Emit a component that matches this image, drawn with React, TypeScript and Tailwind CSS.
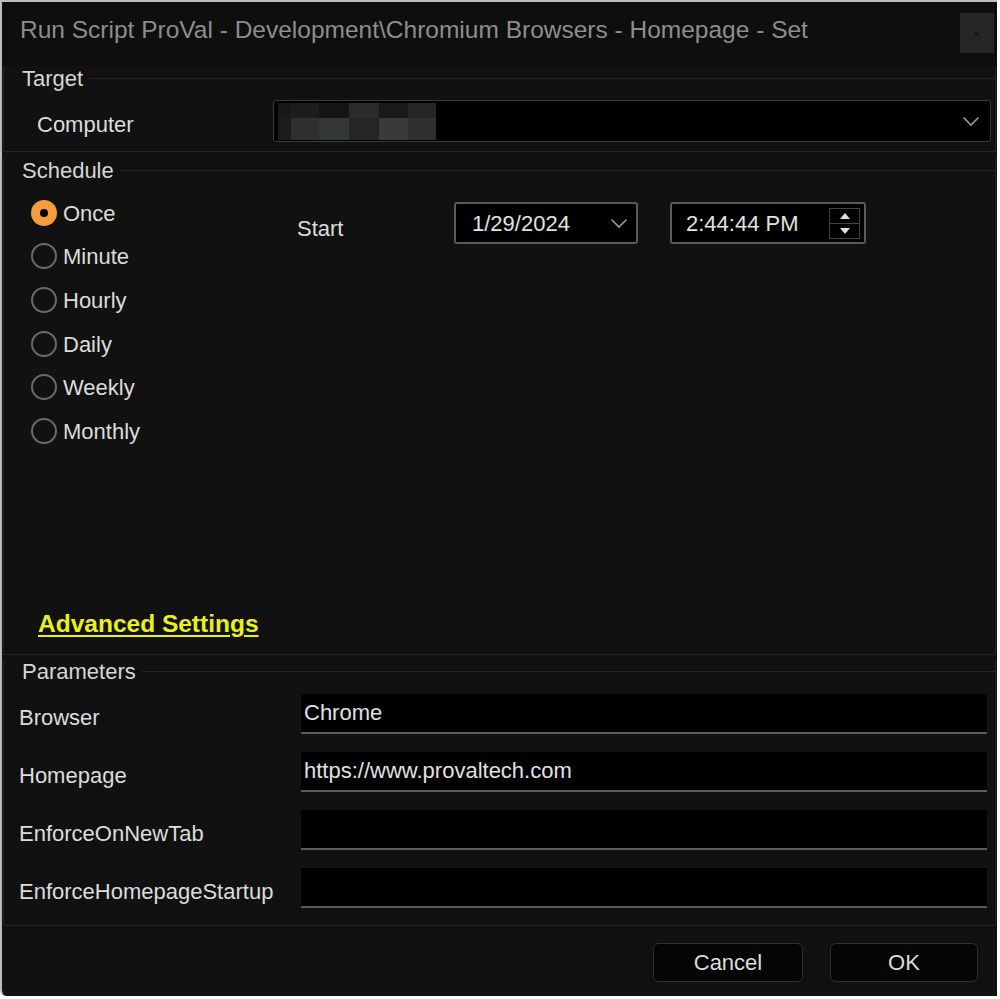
import { useState } from "react";

const font = { fontFamily: '"Liberation Sans", Arial, sans-serif' };

function Chevron({ className }: { className?: string }) {
    return (
        <svg width="18" height="11" viewBox="0 0 18 11" className={className} fill="none" stroke="currentColor" strokeWidth={1.6}>
            <polyline points="1.5,1.5 9,9 16.5,1.5" />
        </svg>
    );
}

function Radio({ label, checked, onClick }: { label: string; checked: boolean; onClick: () => void }) {
    return (
        <div className="flex h-[43.6px] items-center cursor-pointer" onClick={onClick}>
            {checked ? (
                <div className="flex h-[26px] w-[26px] items-center justify-center rounded-full bg-[#f59d3c]">
                    <div className="h-[8px] w-[8px] rounded-full bg-black" />
                </div>
            ) : (
                <div className="h-[26px] w-[26px] rounded-full border-2 border-[#6a6a6a]" />
            )}
            <span className="ml-[6px] pt-[2px] text-[22px] leading-[28px] text-[#dcdcdc]">{label}</span>
        </div>
    );
}

function GroupHeader({ title }: { title: string }) {
    return (
        <div className="flex h-[24px] items-center">
            <span className="pl-[18px] pr-[6px] pt-[2px] text-[22px] leading-[24px] text-[#d6d6d6]">{title}</span>
            <div className="h-px flex-1 bg-[#262626]" />
        </div>
    );
}

export default function App() {
    const [freq, setFreq] = useState("Once");

    const frequencies = ["Once", "Minute", "Hourly", "Daily", "Weekly", "Monthly"];

    const params = [
        { name: "Browser", value: "Chrome" },
        { name: "Homepage", value: "https://www.provaltech.com" },
        { name: "EnforceOnNewTab", value: "" },
        { name: "EnforceHomepageStartup", value: "" },
    ];

    // blurred computer name
    const blurTop = ["#171919", "#1c1e1e", "#141515", "#2a2a2a", "#1a1a1a", "#262626"];
    const blurBottom = ["#1b1d1d", "#2f3131", "#333737", "#252525", "#3a3a3a", "#2f2f2f"];
    const blurWidths = ["w-[13px]", "w-[28px]", "w-[30px]", "w-[30px]", "w-[29px]", "w-[28px]"];

    return (
        <div className="h-[999px] w-[1000px] bg-white" style={font}>
            <div className="flex h-[996px] w-[997px] flex-col rounded-bl-[6px] border-l-2 border-t-2 border-[#bcbcbc] bg-[#111111]">
                {/* Title bar */}
                <div className="flex h-[64px] items-start justify-between bg-[#0e0e0e]">
                    <div className="mt-[14px] pl-[18px] text-[24.5px] leading-[28px] text-[#8d8d8d]">
                        Run Script ProVal - Development\Chromium Browsers - Homepage - Set
                    </div>
                    <button className="mr-[3px] mt-[11px] flex h-[40px] w-[34px] items-center justify-center bg-[#262626] text-[15px] leading-none text-[#111]">
                        ×
                    </button>
                </div>

                {/* Target */}
                <div className="mx-[1px] border-x border-b border-[#232323] pb-[9px]">
                    <GroupHeader title="Target" />
                    <div className="mt-[10px] flex h-[42px] items-center">
                        <span className="w-[269px] shrink-0 pl-[33px] pt-[7px] text-[22px] text-[#dcdcdc]">Computer</span>
                        <div className="mr-[4px] flex h-[42px] flex-1 items-center rounded-[3px] border border-[#3a3a3a] bg-black pl-[4px] pr-[10px]">
                            <div className="flex h-[37px] flex-col">
                                <div className="flex h-[15px]">
                                    {blurTop.map((c, i) => (
                                        <div key={i} className={blurWidths[i]} style={{ backgroundColor: c }} />
                                    ))}
                                </div>
                                <div className="flex h-[22px]">
                                    {blurBottom.map((c, i) => (
                                        <div key={i} className={blurWidths[i]} style={{ backgroundColor: c }} />
                                    ))}
                                </div>
                            </div>
                            <div className="flex-1" />
                            <Chevron className="text-[#9c9c9c]" />
                        </div>
                    </div>
                </div>

                {/* Schedule */}
                <div className="mx-[1px] mt-[6px] flex h-[497px] flex-col border-x border-b border-[#232323]">
                    <GroupHeader title="Schedule" />
                    <div className="flex">
                        <div className="mt-[9px] w-[293px] shrink-0 pl-[27px]">
                            {frequencies.map((f) => (
                                <Radio key={f} label={f} checked={freq === f} onClick={() => setFreq(f)} />
                            ))}
                        </div>
                        <div className="flex items-start pt-[20px]">
                            <span className="mt-[13px] w-[157px] text-[22px] leading-[28px] text-[#dcdcdc]">Start</span>
                            <div className="flex h-[42px] w-[184px] items-center justify-between rounded-[3px] border-2 border-[#5a5a5a] bg-black pl-[16px] pr-[8px]">
                                <span className="pt-[1px] text-[22px] text-[#e2e2e2]">1/29/2024</span>
                                <Chevron className="text-[#9a9a9a]" />
                            </div>
                            <div className="ml-[32px] flex h-[42px] w-[196px] items-center justify-between rounded-[3px] border-2 border-[#5a5a5a] bg-black pl-[14px] pr-[4px]">
                                <span className="pt-[1px] text-[22px] text-[#e2e2e2]">2:44:44 PM</span>
                                <div className="flex h-[31px] w-[31px] flex-col border border-[#444]">
                                    <div className="flex flex-1 items-center justify-center border-b border-[#444]">
                                        <div className="h-0 w-0 border-x-[5px] border-b-[6px] border-x-transparent border-b-[#e0e0e0]" />
                                    </div>
                                    <div className="flex flex-1 items-center justify-center">
                                        <div className="h-0 w-0 border-x-[5px] border-t-[6px] border-x-transparent border-t-[#e0e0e0]" />
                                    </div>
                                </div>
                            </div>
                        </div>
                    </div>
                    <div className="mt-auto pb-[15px] pl-[34px]">
                        <a className="cursor-pointer text-[24.5px] font-bold leading-[30px] text-[#e9f01a] underline decoration-2 underline-offset-[3px]">
                            Advanced Settings
                        </a>
                    </div>
                </div>

                {/* Parameters */}
                <div className="mx-[1px] mt-[4px] border-x border-b border-[#232323] pb-[17px]">
                    <GroupHeader title="Parameters" />
                    <div className="mt-[11px] flex flex-col gap-[18px]">
                        {params.map((p) => (
                            <div key={p.name} className="flex h-[40px] items-center">
                                <span className="w-[297px] shrink-0 pl-[15px] pt-[6px] text-[22px] text-[#dcdcdc]">{p.name}</span>
                                <div className="mr-[8px] flex h-[40px] flex-1 items-center border-b-2 border-[#5c5c5c] bg-black pb-[2px] pl-[3px]">
                                    <span className="text-[22px] text-[#e0e0e0]">{p.value}</span>
                                </div>
                            </div>
                        ))}
                    </div>
                </div>

                {/* Footer */}
                <div className="mt-[17px] flex justify-end gap-[27px] pr-[19px]">
                    <button className="h-[39px] w-[150px] rounded-[6px] border border-[#2e2e2e] bg-[#050505] text-[22px] text-[#dcdcdc]">
                        Cancel
                    </button>
                    <button className="h-[39px] w-[148px] rounded-[6px] border border-[#2e2e2e] bg-[#050505] text-[22px] text-[#dcdcdc]">
                        OK
                    </button>
                </div>
            </div>
        </div>
    );
}
